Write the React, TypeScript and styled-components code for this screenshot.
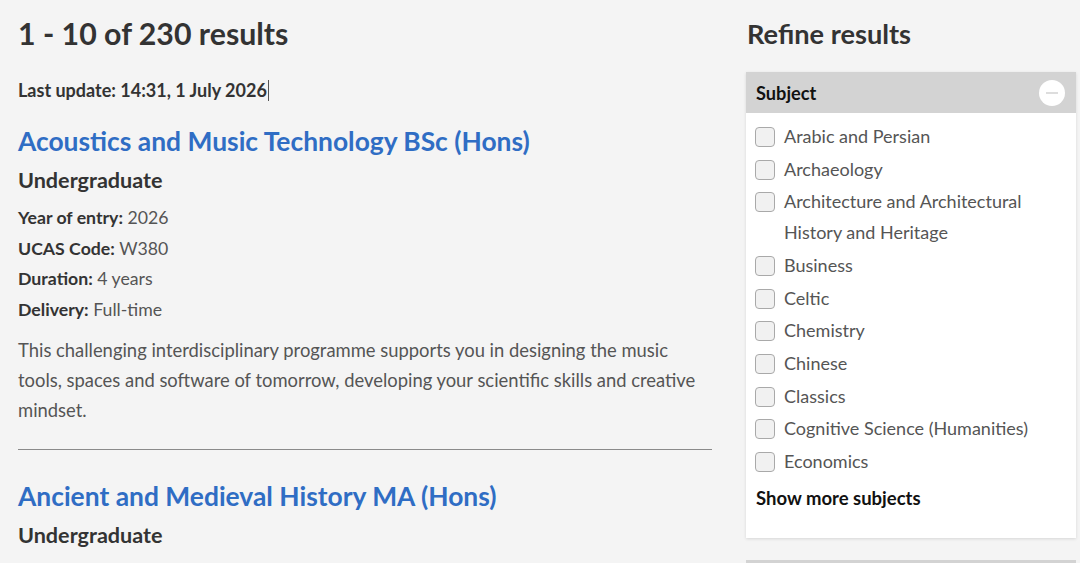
import React from 'react';
import styled, { createGlobalStyle } from 'styled-components';

const GlobalStyle = createGlobalStyle`
  body {
    margin: 0;
    background: #f4f4f4;
    font-family: Lato, "Liberation Sans", sans-serif;
    color: #333;
  }
`;

const Page = styled.div`
  display: grid;
  grid-template-columns: 694px 330px;
  column-gap: 34px;
  padding: 0 0 0 18px;
  height: 563px;
  overflow: hidden;
`;

const Results = styled.main`
  display: flex;
  flex-direction: column;
`;

const Heading = styled.h1`
  margin: 14px 0 0;
  font-size: 30.3px;
  line-height: 38px;
  font-weight: 700;
  color: #333;
`;

const Updated = styled.p`
  margin: 27px 0 0;
  font-size: 18px;
  line-height: 22px;
  font-weight: 700;
  color: #333;
`;

const Caret = styled.span`
  display: inline-block;
  width: 1px;
  height: 21px;
  margin-left: 1px;
  background: #555;
  vertical-align: -4px;
`;

const Programme = styled.article<{ $last?: boolean }>`
  padding: ${(p) => (p.$last ? '29px 0 0' : '23px 0 24px')};
  border-bottom: ${(p) => (p.$last ? 'none' : '1px solid #8a8a8a')};
`;

const Title = styled.a`
  display: block;
  font-size: 26.4px;
  line-height: 34px;
  font-weight: 700;
  color: #2f6dc4;
  text-decoration: none;
`;

const Level = styled.h3`
  margin: 8px 0 9px;
  font-size: 21.6px;
  line-height: 28px;
  font-weight: 700;
  color: #333;
`;

const Meta = styled.div`
  font-size: 17.7px;
  line-height: 30.7px;
  color: #555;

  b {
    color: #333;
  }
`;

const Summary = styled.p`
  margin: 9px 0 0;
  font-size: 18.4px;
  line-height: 30px;
  color: #555;
`;

const Sidebar = styled.aside`
  display: flex;
  flex-direction: column;
`;

const SideHeading = styled.h2`
  margin: 16px 0 0 1px;
  font-size: 27.2px;
  line-height: 36px;
  font-weight: 700;
  color: #333;
`;

const Facet = styled.section`
  margin-top: 20px;
  background: #fff;
  box-shadow: 0 1px 3px rgba(0, 0, 0, 0.12);
`;

const FacetHeader = styled.div`
  display: flex;
  align-items: center;
  justify-content: space-between;
  height: 41px;
  padding: 0 10px;
  background: #d3d3d3;
  font-size: 18.2px;
  font-weight: 700;
  color: #111;
`;

const Toggle = styled.span`
  position: relative;
  width: 26px;
  height: 26px;
  margin-right: 1px;
  border-radius: 50%;
  background: #fff;

  &::after {
    content: '';
    position: absolute;
    left: 7px;
    right: 7px;
    top: 12px;
    height: 2px;
    background: #ddd;
  }
`;

const Options = styled.ul`
  list-style: none;
  margin: 0;
  padding: 8px 10px 0 9px;
`;

const Option = styled.li`
  display: flex;
  align-items: flex-start;
  gap: 9px;
  margin-bottom: 2px;
  font-size: 18px;
  line-height: 30.7px;
  color: #555;
`;

const Box = styled.span`
  flex: none;
  width: 18px;
  height: 18px;
  margin-top: 6px;
  border: 1px solid #a9a9a9;
  border-radius: 4px;
  background: #f1f1f1;
`;

const ShowMore = styled.button`
  display: block;
  margin: 6px 0 0 10px;
  padding: 0 0 25px;
  border: 0;
  background: none;
  font: 700 18.5px/30px Lato, "Liberation Sans", sans-serif;
  color: #111;
  text-align: left;
`;

const NextFacet = styled.div`
  margin-top: 22px;
  height: 30px;
  background: #d3d3d3;
`;

const subjects = [
  'Arabic and Persian',
  'Archaeology',
  'Architecture and Architectural History and Heritage',
  'Business',
  'Celtic',
  'Chemistry',
  'Chinese',
  'Classics',
  'Cognitive Science (Humanities)',
  'Economics',
];

export default function App() {
  return (
    <>
      <GlobalStyle />
      <Page>
        <Results>
          <Heading>1 - 10 of 230 results</Heading>
          <Updated>
            Last update: 14:31, 1 July 2026
            <Caret />
          </Updated>
          <Programme>
            <Title href="#">Acoustics and Music Technology BSc (Hons)</Title>
            <Level>Undergraduate</Level>
            <Meta>
              <b>Year of entry:</b> 2026
            </Meta>
            <Meta>
              <b>UCAS Code:</b> W380
            </Meta>
            <Meta>
              <b>Duration:</b> 4 years
            </Meta>
            <Meta>
              <b>Delivery:</b> Full-time
            </Meta>
            <Summary>
              This challenging interdisciplinary programme supports you in designing the music
              tools, spaces and software of tomorrow, developing your scientific skills and
              creative mindset.
            </Summary>
          </Programme>
          <Programme $last>
            <Title href="#">Ancient and Medieval History MA (Hons)</Title>
            <Level>Undergraduate</Level>
          </Programme>
        </Results>
        <Sidebar>
          <SideHeading>Refine results</SideHeading>
          <Facet>
            <FacetHeader>
              Subject
              <Toggle />
            </FacetHeader>
            <Options>
              {subjects.map((s) => (
                <Option key={s}>
                  <Box />
                  {s}
                </Option>
              ))}
            </Options>
            <ShowMore>Show more subjects</ShowMore>
          </Facet>
          <NextFacet />
        </Sidebar>
      </Page>
    </>
  );
}
